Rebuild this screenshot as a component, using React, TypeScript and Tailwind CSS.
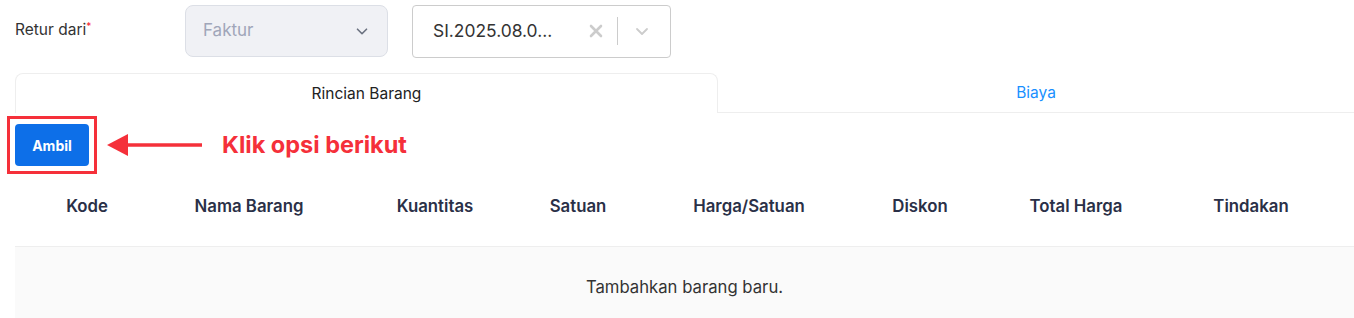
import React from "react";

const kolom = ["Kode", "Nama Barang", "Kuantitas", "Satuan", "Harga/Satuan", "Diskon", "Total Harga", "Tindakan"];

function Chevron({ className }: { className?: string }) {
  return (
    <svg viewBox="0 0 20 20" className={className} fill="none" stroke="currentColor" strokeWidth={1.8} strokeLinecap="round" strokeLinejoin="round">
      <path d="M5 8l5 5 5-5" />
    </svg>
  );
}

export default function App() {
  return (
    <div className="w-[1354px] h-[318px] overflow-hidden bg-white font-['Inter',sans-serif] text-[#333]">
      {/* baris pilihan retur */}
      <div className="flex items-center h-[62px] pl-[15px]">
        <label className="w-[170px] text-[15.5px] text-[#333] -mt-[2px]">
          Retur dari<sup className="text-[#f5222d] text-[10px]">*</sup>
        </label>
        <div className="w-[203px] h-[52px] flex items-center justify-between pl-[17px] pr-[16px] rounded-lg border border-[#dcdfe6] bg-[#f0f1f5] text-[17px] text-[#a0a6b9]">
          <span>Faktur</span>
          <Chevron className="w-[18px] h-[18px] text-[#6b7280]" />
        </div>
        <div className="ml-[24px] w-[259px] h-[53px] flex items-center rounded border border-[#cccccc] bg-white">
          <span className="flex-1 pl-[20px] text-[17.4px] text-[#333]">SI.2025.08.0...</span>
          <svg viewBox="0 0 20 20" className="w-5 h-5 text-[#cccccc] mr-[11px]" fill="none" stroke="currentColor" strokeWidth={2.6} strokeLinecap="round">
            <path d="M5 5l10 10M15 5L5 15" />
          </svg>
          <span className="w-px h-[28px] bg-[#cccccc]" />
          <Chevron className="w-5 h-5 text-[#cccccc] ml-[14px] mr-[18px]" />
        </div>
      </div>

      {/* tab */}
      <div className="flex mt-[11px] pl-[15px]">
        <div className="w-[703px] h-[40px] flex items-center justify-center rounded-t-lg border border-b-0 border-[#eeeeee] text-[15.5px] text-[#222]">
          Rincian Barang
        </div>
        <div className="flex-1 h-[40px] flex items-center justify-center border-b border-[#eeeeee] text-[15.5px] text-[#1890ff]">
          Biaya
        </div>
      </div>

      {/* tombol ambil + petunjuk */}
      <div className="flex items-center h-[64px] pl-[7px]">
        <div className="p-[5px] border-[3px] border-[#f5303a]">
          <button className="w-[74px] h-[42px] rounded bg-[#0d6fe8] text-white text-[14px] font-bold">Ambil</button>
        </div>
        <svg width="100" height="24" viewBox="0 0 100 24" className="ml-[9px]">
          <path d="M1 12 L22 1 L22 23 Z" fill="#f5303a" />
          <path d="M20 12 H96" stroke="#f5303a" strokeWidth={3.5} />
        </svg>
        <span className="ml-[16px] text-[23.5px] font-bold text-[#f5303a] -mt-[1px]">Klik opsi berikut</span>
      </div>

      {/* tabel */}
      <div className="ml-[15px]">
        <div className="grid grid-cols-[144px_180px_192px_94px_248px_94px_218px_132px] h-[70px] items-start pt-[17px] border-b border-[#eeeeee]">
          {kolom.map((k) => (
            <div key={k} className="text-center text-[16.8px] leading-[24px] font-semibold text-[#2a3047]">
              {k}
            </div>
          ))}
        </div>
        <div className="h-[80px] bg-[#fafafa] flex items-center justify-center text-[16.7px] text-[#333] pt-[2px]">
          Tambahkan barang baru.
        </div>
      </div>
    </div>
  );
}
